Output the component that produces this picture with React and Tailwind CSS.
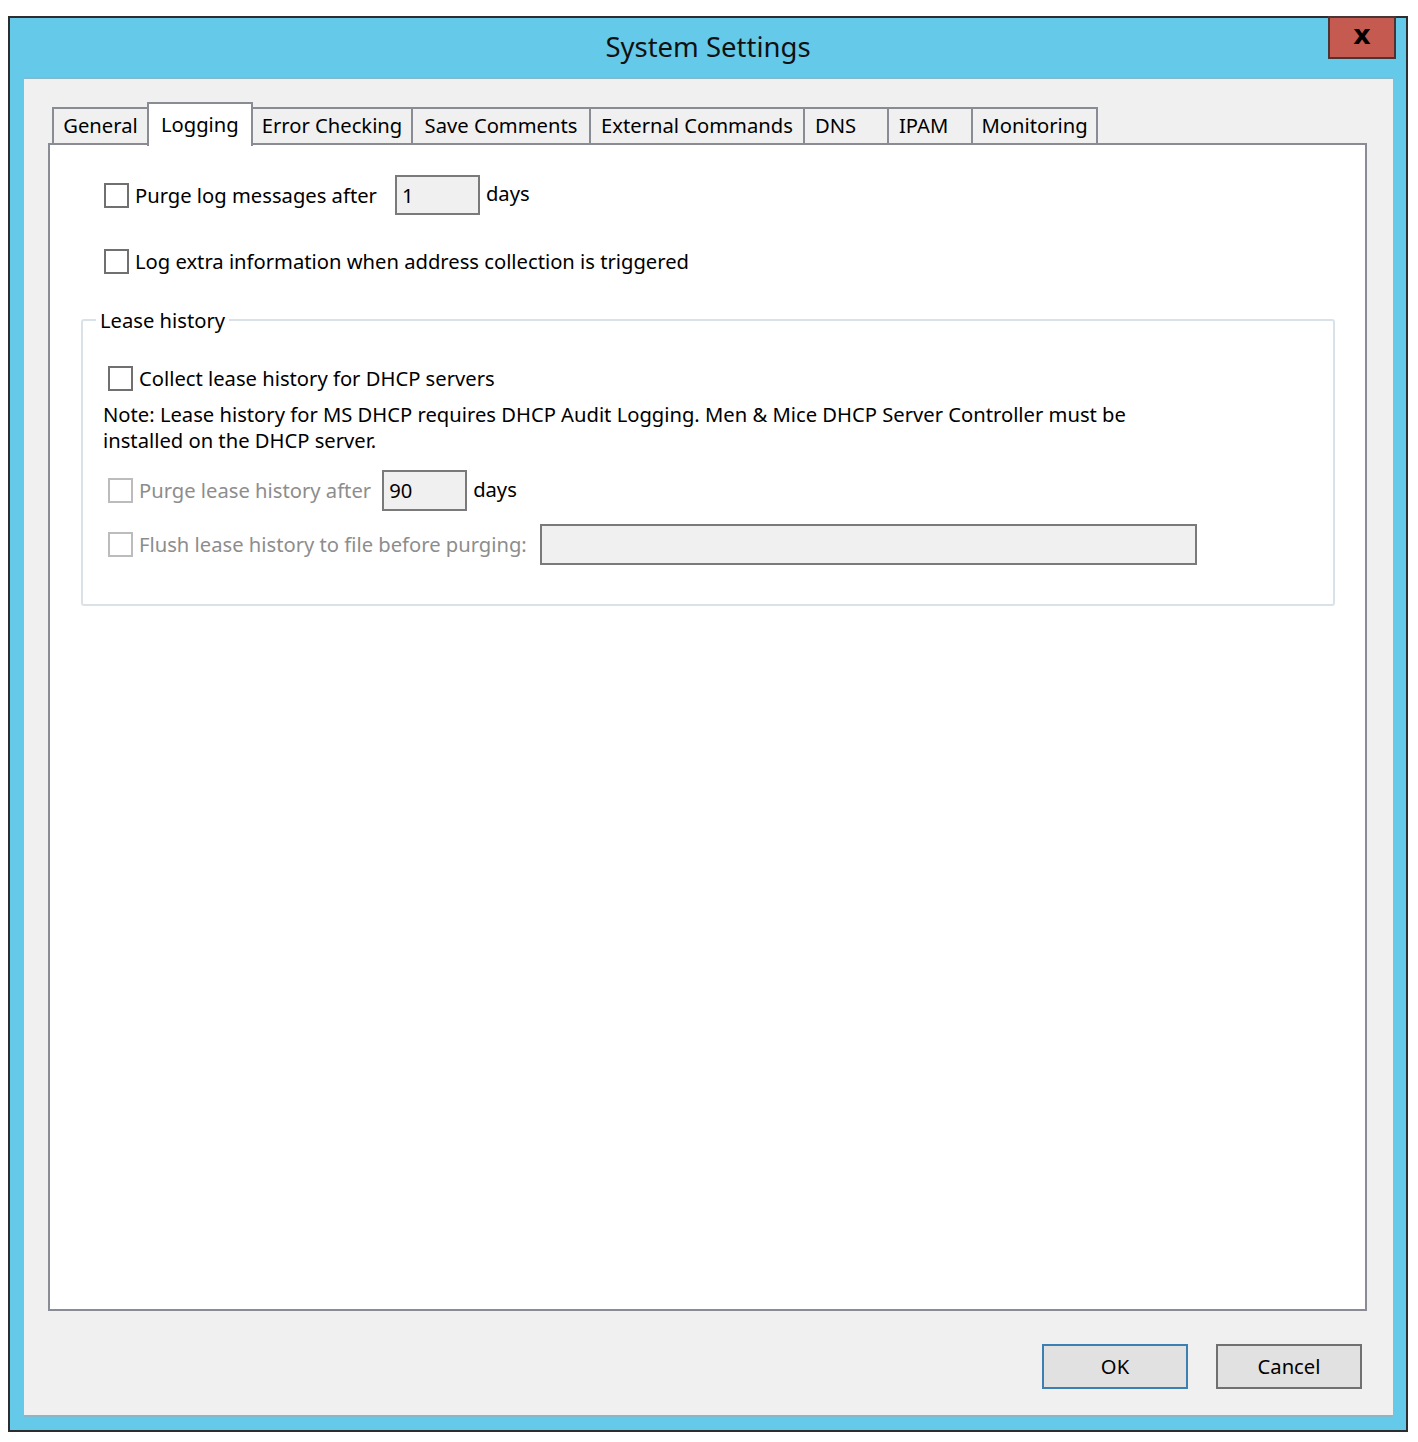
import React from "react";

const font = { fontFamily: '"Noto Sans", "Open Sans", sans-serif' };

function Check({ disabled }) {
  return (
    <span
      className={
        "block w-[25px] h-[25px] shrink-0 border-2 bg-white " +
        (disabled ? "border-[#bcbcbc]" : "border-[#707070]")
      }
    />
  );
}

function Field({ value, w, h }) {
  return (
    <div
      className="border-2 border-[#7a7a7a] bg-[#f0f0f0] flex items-center pl-[5px] text-black shrink-0"
      style={{ width: w, height: h }}
    >
      {value}
    </div>
  );
}

const tabs = [
  { label: "General", w: 97, center: true },
  { label: "Logging", w: 106, selected: true },
  { label: "Error Checking", w: 162, center: true },
  { label: "Save Comments", w: 180, center: true },
  { label: "External Commands", w: 216, center: true },
  { label: "DNS", w: 86 },
  { label: "IPAM", w: 86 },
  { label: "Monitoring", w: 127, center: true },
];

export default function App() {
  return (
    <div className="min-h-[1442px] bg-white pt-[16px] pl-[8px] text-[20.2px] text-black" style={font}>
      <div className="w-[1400px] h-[1416px] border-2 border-[#2d2d30] bg-[#65c9e9] flex flex-col">
        {/* Title bar */}
        <div className="relative h-[59px] flex items-center justify-center shrink-0">
          <span className="text-[27.5px] text-[#111] -mt-[2px]">System Settings</span>
          <div className="absolute -top-[2px] right-[10px] w-[68px] h-[43px] bg-[#c45a50] border-2 border-[#4a3434] flex items-center justify-center">
            <span
              className="text-[27px] font-bold leading-none text-black -mt-[7px]"
              style={{ fontFamily: '"DejaVu Sans", sans-serif' }}
            >
              x
            </span>
          </div>
        </div>
        {/* Client area */}
        <div className="mx-[14px] w-[1369px] h-[1340px] border-y-2 border-[#86b7cb] bg-[#f0f0f0] flex flex-col pt-[23px] pl-[24px] pr-[26px]">
          {/* Tab strip */}
          <div className="h-[41px] flex items-end pl-[4px] shrink-0">
            {tabs.map((t, i) =>
              t.selected ? (
                <div
                  key={t.label}
                  className="relative z-10 h-[44px] -mb-[3px] border-2 border-b-0 border-[#898c95] bg-white flex items-start pt-[5px] pl-[12px] -ml-[2px]"
                  style={{ width: t.w }}
                >
                  {t.label}
                </div>
              ) : (
                <div
                  key={t.label}
                  className={
                    "h-[36px] border-2 border-b-0 border-[#898c95] bg-[#f0f0f0] flex items-center pb-[1px] whitespace-nowrap " +
                    (t.center ? "justify-center " : "pl-[10px] ") +
                    (i > 0 ? "-ml-[2px]" : "")
                  }
                  style={{ width: t.w }}
                >
                  {t.label}
                </div>
              )
            )}
          </div>
          {/* Panel */}
          <div className="h-[1168px] border-2 border-[#898c95] bg-white shrink-0 flex flex-col">
            {/* Row 1 */}
            <div className="mt-[30px] ml-[54px] h-[40px] flex items-center">
              <Check />
              <span className="ml-[6px]">Purge log messages after</span>
              <div className="ml-[18px]">
                <Field value="1" w={85} h={40} />
              </div>
              <span className="ml-[6px] -mt-[3px]">days</span>
            </div>
            {/* Row 2 */}
            <div className="mt-[34px] ml-[54px] h-[25px] flex items-center">
              <Check />
              <span className="ml-[6px]">Log extra information when address collection is triggered</span>
            </div>
            {/* Group box */}
            <fieldset className="mt-[33px] ml-[31px] mr-[30px] border-2 border-[#d9e2e9] rounded-[3px] p-0 pb-[39px]">
              <legend className="ml-[13px] px-[4px] leading-[26px]">Lease history</legend>
              <div className="mt-[32px] ml-[25px] h-[26px] flex items-center">
                <Check />
                <span className="ml-[6px]">Collect lease history for DHCP servers</span>
              </div>
              <div className="mt-[10px] ml-[20px] leading-[26px]">
                Note: Lease history for MS DHCP requires DHCP Audit Logging. Men &amp; Mice DHCP Server Controller must be
                <br />
                installed on the DHCP server.
              </div>
              <div className="mt-[17px] ml-[25px] h-[41px] flex items-center">
                <Check disabled />
                <span className="ml-[6px] text-[#8d8d8d]">Purge lease history after</span>
                <div className="ml-[11px]">
                  <Field value="90" w={85} h={41} />
                </div>
                <span className="ml-[6px] -mt-[2px]">days</span>
              </div>
              <div className="mt-[13px] ml-[25px] h-[41px] flex items-center">
                <Check disabled />
                <span className="ml-[6px] text-[#8d8d8d]">Flush lease history to file before purging:</span>
                <div className="ml-[13px]">
                  <Field value="" w={657} h={41} />
                </div>
              </div>
            </fieldset>
          </div>
          {/* Buttons */}
          <div className="mt-[33px] flex justify-end gap-[28px] pr-[5px]">
            <div className="w-[146px] h-[45px] border-2 border-[#3c7fb1] bg-[#e1e1e1] flex items-center justify-center">
              OK
            </div>
            <div className="w-[146px] h-[45px] border-2 border-[#707070] bg-[#e1e1e1] flex items-center justify-center">
              Cancel
            </div>
          </div>
        </div>
      </div>
    </div>
  );
}
